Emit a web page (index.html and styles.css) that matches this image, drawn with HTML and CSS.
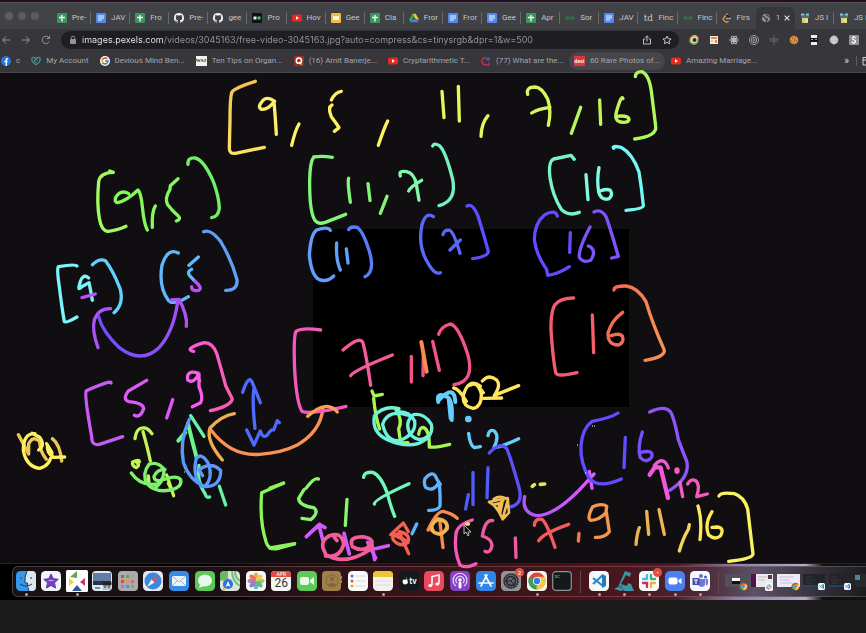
FILE: index.html
```html
<!DOCTYPE html>
<html lang="en">
<head>
<meta charset="utf-8">
<title>images.pexels.com</title>
<link rel="stylesheet" href="styles.css">
</head>
<body>
<svg class="defs" aria-hidden="true">
  <symbol id="sheet" viewBox="0 0 10 10"><rect width="10" height="10" rx="1" fill="#3b965b"/><path d="M5 2v6.500M2 4.500h6" stroke="#eef8ef" stroke-width="1.400"/></symbol>
  <symbol id="doc" viewBox="0 0 10 10"><rect width="10" height="10" rx="1" fill="#5288ee"/><path d="M2 3h6M2 5h6M2 7h4" stroke="#f4f7ff" stroke-width="1.100"/></symbol>
  <symbol id="slides" viewBox="0 0 10 10"><rect width="10" height="10" rx="1" fill="#eebb3e"/><rect x="2" y="3" width="6" height="4" fill="#fff8dc"/></symbol>
  <symbol id="github" viewBox="0 0 16 16"><path fill="#f3f3f3" d="M8 0a8 8 0 0 0-2.530 15.590c.4.070.55-.17.55-.38v-1.490c-2.010.37-2.530-.49-2.690-.94-.09-.23-.48-.94-.82-1.130-.28-.15-.68-.52 0-.53.63 0 1.080.58 1.230.82.72 1.210 1.870.87 2.330.66.070-.52.280-.87.510-1.070-1.780-.2-3.640-.89-3.640-3.950 0-.87.310-1.590.820-2.150-.080-.2-.36-1.020.080-2.120 0 0 .67-.21 2.200.82a7.600 7.600 0 0 1 4 0c1.530-1.040 2.200-.82 2.200-.82.440 1.100.160 1.920.080 2.120.510.560.820 1.270.820 2.150 0 3.070-1.870 3.750-3.650 3.950.290.250.540.730.540 1.480v2.200c0 .210.150.460.550.380A8 8 0 0 0 8 0z"/></symbol>
  <symbol id="youtube" viewBox="0 0 10 10"><rect y="1.500" width="10" height="7" rx="2" fill="#e8291f"/><path d="M4 3.300v3.400l3-1.700z" fill="#fff"/></symbol>
  <symbol id="drive" viewBox="0 0 10 10"><path d="M3.400.8h3.200L10 6.500H6.800z" fill="#f4c534"/><path d="M3.400.8 0 6.500l1.600 2.700L5 3.500z" fill="#38a35f"/><path d="M3.200 6.500H10L8.400 9.200H1.600z" fill="#477fe8"/></symbol>
  <symbol id="gfg" viewBox="0 0 10 10"><path d="M4.800 5H.7M5.200 5h4.100M3.900 3.800Q1 2.500.8 5q.4 2.500 4 0M6.100 3.800Q9 2.500 9.200 5q-.4 2.500-4 0" fill="none" stroke="#36784a" stroke-width="1"/></symbol>
  <symbol id="bot" viewBox="0 0 10 10"><path d="M1 1h8v4H1z" fill="#526d77"/><path d="M1 .5h3v2H1zM6 .5h3v2H6z" fill="#77c5d5"/><path d="M2 5h6v5H2z" fill="#d1cf86"/><path d="M5 6h3v3H5z" fill="#f4e94e"/></symbol>
  <symbol id="chrome" viewBox="0 0 20 20"><circle cx="10" cy="10" r="8.500" fill="#e04a3d"/><path d="M10 10 2.600 5.800A8.500 8.500 0 0 0 9.400 18.500z" fill="#38a35a"/><path d="M10 10 9.400 18.500A8.500 8.500 0 0 0 17.400 5.800H10z" fill="#f6c840"/><circle cx="10" cy="10" r="4" fill="#fff"/><circle cx="10" cy="10" r="3.200" fill="#397be5"/></symbol>
  <symbol id="vscode" viewBox="0 0 20 20"><rect width="20" height="20" rx="4.500" fill="#f6f9fc"/><path d="m4 7 10 8M4 13l10-9" stroke="#2489cf" stroke-width="2.200"/><path d="m13 3 4 2v10l-4 2z" fill="#2879ba"/></symbol>
  <symbol id="slack" viewBox="0 0 20 20"><rect width="20" height="20" rx="4.500" fill="#fafafa"/><g fill="none" stroke-width="2.300" stroke-linecap="round"><path d="M8 4v4M4 8h4" stroke="#4bbbe2"/><path d="M12 4v4M12 8h4" stroke="#3fae7b"/><path d="M12 12h4M12 12v4" stroke="#e8b33c"/><path d="M4 12h4v4" stroke="#d52d61"/></g></symbol>
</svg>

<header class="browser">
  <nav class="tabstrip" aria-label="Tabs">
    <div class="lights"><i></i><i></i><i></i></div>
    <div class="tabs">
      <button class="tab"><svg><use href="#sheet"/></svg><span>Pre-</span></button>
      <button class="tab"><svg><use href="#doc"/></svg><span>JAV</span></button>
      <button class="tab"><svg><use href="#sheet"/></svg><span>Fro</span></button>
      <button class="tab"><svg><use href="#github"/></svg><span>Pre-</span></button>
      <button class="tab"><svg><use href="#github"/></svg><span>gee</span></button>
      <button class="tab"><svg viewBox="0 0 10 10"><rect width="10" height="10" fill="#0b1418"/><path d="M1.500 3.500h3v3h-3z" fill="#e8eee9"/><path d="M5.500 3.500h3v3h-3z" fill="#42cf63"/></svg><span>Pro</span></button>
      <button class="tab"><svg><use href="#youtube"/></svg><span>Hov</span></button>
      <button class="tab"><svg><use href="#slides"/></svg><span>Gee</span></button>
      <button class="tab"><svg><use href="#sheet"/></svg><span>Cla</span></button>
      <button class="tab"><svg><use href="#drive"/></svg><span>Fror</span></button>
      <button class="tab"><svg><use href="#doc"/></svg><span>Fror</span></button>
      <button class="tab"><svg><use href="#doc"/></svg><span>Gee</span></button>
      <button class="tab"><svg><use href="#sheet"/></svg><span>Apr</span></button>
      <button class="tab"><svg><use href="#gfg"/></svg><span>Sor</span></button>
      <button class="tab"><svg><use href="#doc"/></svg><span>JAV</span></button>
      <button class="tab"><b>td</b><span>Finc</span></button>
      <button class="tab"><svg><use href="#gfg"/></svg><span>Finc</span></button>
      <button class="tab last"><svg viewBox="0 0 10 10" fill="none" stroke-width="1.200"><path d="M5.500.5 2 4.500q-1.500 1.500 0 3l1.500 1.300q1.400 1 3-.5" stroke="#e6a23e"/><path d="M4 5.500h5" stroke="#aaa"/><path d="m4 2 3 2" stroke="#16171a"/></svg><span>Firs</span></button>
      <button class="tab active"><svg viewBox="0 0 10 10"><circle cx="5" cy="5" r="4.300" fill="#8b8f94"/><path d="M1 4q2-1 3 1t2 1-1 3M6 1q-1 2 1 2t2 2" fill="none" stroke="#34363a" stroke-width="1.200"/></svg><span>1</span><svg class="close" viewBox="0 0 10 10"><path d="m2 2 6 6m0-6-6 6" stroke="#ddd" stroke-width="1.400"/></svg></button>
      <button class="tab"><svg><use href="#bot"/></svg><span>JS I</span></button>
      <button class="tab"><svg><use href="#bot"/></svg><span>JS I</span></button>
    </div>
  </nav>

  <div class="toolbar">
    <div class="nav">
      <button aria-label="Back"><svg viewBox="0 0 10 10"><path d="M9 5H1.500M5 1.500 1.500 5 5 8.500"/></svg></button>
      <button aria-label="Forward"><svg viewBox="0 0 10 10"><path d="M1 5h7.500M5 1.500 8.500 5 5 8.500"/></svg></button>
      <button aria-label="Reload"><svg viewBox="0 0 10 10"><path d="M8.300 6.500a3.700 3.700 0 1 1-.2-3.500M8.500.8v2.700H5.800"/></svg></button>
    </div>
    <div class="address">
      <svg class="lock" viewBox="0 0 10 10"><rect x="2" y="4" width="6" height="5" rx="1" fill="#92959a"/><path d="M3.300 4V2.700q0-1.500 1.700-1.500t1.700 1.500V4" fill="none" stroke="#92959a"/></svg>
      <input aria-label="Address" type="text" value="images.pexels.com/videos/3045163/free-video-3045163.jpg?auto=compress&amp;cs=tinysrgb&amp;dpr=1&amp;w=500">
      <button aria-label="Share"><svg viewBox="0 0 10 10"><path d="M3.200 4H1.500v5h7V4H6.800M5 6.500V1M3.300 2.500 5 .8l1.700 1.700"/></svg></button>
      <button aria-label="Bookmark"><svg viewBox="0 0 10 10"><path d="m5 1 1.200 2.700 2.900.3-2.200 1.900.7 2.900L5 7.300 2.400 8.800l.7-2.900L.9 4l2.900-.3z"/></svg></button>
    </div>
    <div class="extensions">
      <button aria-label="Colour picker"><svg viewBox="0 0 10 10"><circle cx="5" cy="5" r="4" fill="#cfe6d8" stroke="#e4793e" stroke-width="1.400"/><path d="M1 5a4 4 0 0 0 7 2.500" fill="none" stroke="#84b945" stroke-width="1.400"/><path d="M4 1Q8 0 9 4" fill="none" stroke="#e9bd45" stroke-width="1.400"/><circle cx="5.500" cy="5" r="2" fill="#21303d"/></svg></button>
      <button aria-label="Layout tool"><svg viewBox="0 0 10 10"><rect x="1" y="1" width="8" height="8" fill="#f2ece5"/><path d="M2 2h6v2H2zM2 5.500h2v1H2zM6 5h2v3H6z" fill="#e58a57"/></svg></button>
      <button aria-label="React tools"><svg viewBox="0 0 10 10" fill="none" stroke="#dadada" stroke-width=".7"><ellipse cx="5" cy="5" rx="4.500" ry="1.700"/><ellipse cx="5" cy="5" rx="4.500" ry="1.700" transform="rotate(60 5 5)"/><ellipse cx="5" cy="5" rx="4.500" ry="1.700" transform="rotate(120 5 5)"/><circle cx="5" cy="5" r=".8" fill="#ddd"/></svg></button>
      <button aria-label="Target"><svg viewBox="0 0 10 10" fill="none" stroke="#b6b7ba" stroke-width=".8"><circle cx="5" cy="5" r="4.500"/><circle cx="5" cy="5" r="2.700"/><circle cx="5" cy="5" r="1"/></svg></button>
      <button aria-label="Ruler"><svg viewBox="0 0 10 10" fill="none" stroke="#66676c"><path d="M0 4h10M5 0v10M1 6h8"/></svg></button>
      <button aria-label="Cookies"><svg viewBox="0 0 10 10"><circle cx="5" cy="5" r="4.300" fill="#d8913b"/><path d="M3 3h1M6 2h1M5 5h1M2 6h1M7 6h1M4 8h1" stroke="#82491e"/></svg></button>
      <button aria-label="Mask"><svg viewBox="0 0 10 10"><path d="M2 0h6v3H2zM2 7l3-1 3 1v3H2z" fill="#eee"/><path d="M1 3h8v4H1z" fill="#181519"/><path d="M2 4.500h2M6 4.500h2" stroke="#dc7894"/></svg></button>
      <button aria-label="Globe"><svg viewBox="0 0 10 10"><circle cx="5" cy="5" r="4.400" fill="#b9bdc4"/><path d="M2 4h6M3 7h4M5 1v8" stroke="#d5d7dd"/></svg></button>
      <button aria-label="S extension"><svg viewBox="0 0 10 10"><rect width="10" height="10" rx="1" fill="#909195"/><path d="M6.800 3Q4-.0 3.500 3.400 4 4.500 5.300 5q2 1.200.7 2.500Q4.500 8.700 3 7" fill="none" stroke="#fff" stroke-width="1.200"/></svg></button>
    </div>
  </div>

  <nav class="bookmarks" aria-label="Bookmarks">
    <a href="#"><svg viewBox="0 0 10 10"><circle cx="5" cy="5" r="5" fill="#2876dc"/><path d="M5.300 10V4q0-1.500 1.700-1.300M3.500 5.500h3" fill="none" stroke="#fff" stroke-width="1.400"/></svg>c</a>
    <a href="#"><svg viewBox="0 0 10 10" fill="none" stroke="#48929a" stroke-width="1.200"><path d="M5 8.800Q-.5 5 1.200 2 3.500-.2 6.500 4.500M5 8.800Q10.500 5 8.800 2 6.500-.2 3.500 4.500q0 2 2 1.500"/></svg>My Account</a>
    <a href="#"><svg viewBox="0 0 10 10" fill="none" stroke-width="1.600"><circle cx="5" cy="5" r="5" fill="#fff"/><path d="M7.300 3A3 3 0 0 0 2.300 3.800" stroke="#df4635"/><path d="M2.300 3.800a3 3 0 0 0 .3 2.900" stroke="#eab530"/><path d="M2.600 6.700A3 3 0 0 0 7 7.200" stroke="#349b54"/><path d="M7 7.200Q8 6.300 8 5H5" stroke="#427fe7"/></svg>Devious Mind Ben...</a>
    <a href="#"><span class="wsj">WSJ</span>Ten Tips on Organ...</a>
    <a href="#"><svg viewBox="0 0 10 10"><rect width="10" height="10" rx="1" fill="#9d3019"/><circle cx="4.900" cy="4.700" r="2.600" fill="none" stroke="#fff" stroke-width="1.500"/><path d="m5 6 2.500 2.500" stroke="#fff" stroke-width="1.300"/></svg>(16) Amit Banerje...</a>
    <a href="#"><svg><use href="#youtube"/></svg>Cryptarithmetic T...</a>
    <a href="#"><svg viewBox="0 0 10 10" fill="none" stroke-width="1.300"><path d="M5 1.500Q1 1.500 1 5t4 4h3V6" stroke="#c93046"/><path d="M7 1v4M5 3h4" stroke="#3f62bc"/></svg>(77) What are the...</a>
    <a href="#" class="current"><span class="desi">desi</span>60 Rare Photos of...</a>
    <a href="#"><svg><use href="#youtube"/></svg>Amazing Marriage...</a>
    <button class="more" aria-label="More bookmarks">»</button>
    <button class="folder" aria-label="All bookmarks"><svg viewBox="0 0 10 10"><path d="M1 1.500h9v7.500H1zM1 4h9" fill="none" stroke="#d2d2d4"/></svg></button>
  </nav>
</header>

<main class="stage">
<svg class="drawing" viewBox="0 73 866 490" role="img" aria-label="Merge sort sketch">
  <defs>
    <linearGradient id="g1" x1="0" y1="0" x2="0" y2="1"><stop stop-color="#f4c057"/><stop offset="1" stop-color="#ffe262"/></linearGradient>
    <linearGradient id="g3"><stop stop-color="#6d4cff"/><stop offset="1" stop-color="#9c50f6"/></linearGradient>
    <linearGradient id="g4"><stop stop-color="#fb5bdf"/><stop offset="1" stop-color="#f65dab"/></linearGradient>
    <linearGradient id="g5"><stop stop-color="#f46859"/><stop offset="1" stop-color="#f89353"/></linearGradient>
    <linearGradient id="g6"><stop stop-color="#ad55ff"/><stop offset="1" stop-color="#db5bff"/></linearGradient>
  </defs>
  <rect x="313" y="229" width="316" height="178"/>
  <g class="ink">
    <g transform="translate(0 70) scale(.33333)">
      <path stroke="url(#g1)" d="M766 34Q703 54 696 66Q690 80 690 150L688 235Q688 252 706 250L793 232"/>
      <path stroke="#fcf06a" d="M824 94Q803 78 789 91Q770 112 785 118Q805 119 822 95Q826 140 829 193"/>
      <path stroke="#a2fa63" d="M329 303L340 307Q300 308 296 335Q290 400 298 445Q305 485 325 484Q350 482 378 469"/>
      <path stroke="#83f95d" d="M386 371Q363 357 347 382Q343 397 352 398Q378 394 414 360Q423 369 427 410Q432 462 442 480M466 408Q455 425 457 472M534 326L511 347L510 358Q493 385 503 404Q518 423 534 437Q545 447 529 453"/>
      <path stroke="#72ef69" d="M564 283Q562 262 585 264Q612 270 640 335Q657 380 658 415Q655 440 635 443"/>
      <path stroke="#79f5fb" d="M231 588Q226 581 175 590Q170 597 178 650Q185 710 193 755Q198 760 231 741M266 624Q247 608 239 642Q232 664 244 651L267 638Q272 660 277 691"/>
      <path stroke="#65cffd" d="M277 584Q300 563 317 573Q338 600 360 655Q373 702 342 728"/>
      <path stroke="#60b8fa" d="M535 549Q503 532 486 585Q475 650 505 691Q520 708 565 680M595 561L567 586M575 598Q560 605 569 617L585 634"/>
      <path stroke="#5e9ff8" d="M611 485Q632 476 661 513Q694 567 711 629Q714 662 677 661"/>
      <path stroke="#b952f6" d="M246 683L286 672M585 634Q609 653 596 661Q574 665 575 650"/>
      <path stroke="url(#g3)" d="M296 740Q307 785 358 833Q423 883 476 834Q520 787 533 696"/>
      <path stroke="#a853f5" d="M332 716Q296 714 283 750Q275 780 294 833M514 690L537 688Q563 735 559 769"/>
    </g>
    <g transform="translate(290 70) scale(.33333)">
      <path stroke="#fff161" d="M27 162Q16 180 5 226M154 64Q135 67 124 90M126 105Q112 112 124 140Q142 164 147 173L133 184M293 153Q282 175 265 226"/>
      <path stroke="#e5f55d" d="M456 64L462 143M505 49L508 153M594 137Q574 160 573 199"/>
      <path stroke="#d5f65c" d="M713 73Q707 51 736 51Q755 52 773 87Q785 123 775 166M725 129Q742 117 780 112"/>
      <path stroke="#bcf45c" d="M872 112L844 190"/>
      <path stroke="#82f578" d="M127 262Q96 257 71 261Q60 276 59 330Q58 420 73 448Q83 465 106 457L167 433M176 325Q172 335 181 397M234 341L240 392M291 379L271 430"/>
      <path stroke="#80f9ad" d="M331 318Q325 300 350 305Q373 310 379 343L387 391M356 363Q361 350 395 331"/>
      <path stroke="#76f0bd" d="M428 228Q432 217 448 227Q466 241 488 328Q501 392 447 407"/>
      <path stroke="#629efb" d="M121 481Q113 469 80 480Q62 492 58 555Q64 615 86 628Q112 638 131 618M140 519Q137 570 151 600M169 537L174 579"/>
      <path stroke="#587df9" d="M176 479Q180 468 202 472Q220 485 237 541Q257 604 225 620"/>
      <path stroke="#5a67f9" d="M430 440Q408 424 396 464Q382 530 416 583Q436 616 451 608M459 494Q463 478 480 481Q492 488 510 550M480 540L511 510"/>
      <path stroke="#5c4eff" d="M531 408Q549 398 565 441Q581 493 595 544Q594 560 548 566"/>
    </g>
    <g transform="translate(520 70) scale(.33333)">
      <path stroke="#c1f35b" d="M239 90L242 163M309 86Q305 72 291 119Q280 152 302 156Q326 160 327 147Q323 135 290 139"/>
      <path stroke="#b0f75e" d="M346 20Q347 5 365 5Q387 13 394 64L407 168Q412 199 344 207"/>
      <path stroke="#77f4ca" d="M163 268L153 256L101 267Q84 275 90 323Q98 377 124 418Q145 440 178 427"/>
      <path stroke="#7efbe5" d="M198 314L204 389M237 293Q230 329 236 366Q244 393 267 386Q280 374 271 361Q258 355 238 364"/>
      <path stroke="#75f6f7" d="M281 235Q274 226 303 232Q337 250 357 306Q365 355 370 407Q369 417 318 421"/>
      <path stroke="#624aff" d="M112 438Q106 417 74 434Q43 460 43 510Q49 555 80 599L83 616Q116 612 148 590M151 488L149 547"/>
      <path stroke="#7f53fa" d="M210 471Q175 537 178 562Q190 580 212 571Q229 546 213 532L205 528M222 426Q243 415 258 440Q268 466 295 559L275 564"/>
      <path stroke="#f45b72" d="M161 684Q122 684 106 703Q92 720 93 782Q99 868 107 908Q110 922 171 908"/>
      <path stroke="#f55f69" d="M217 735L221 848"/>
      <path stroke="#f46c59" d="M308 727Q274 752 264 789Q263 826 296 825Q314 817 307 798Q297 788 274 797"/>
      <path stroke="url(#g5)" d="M282 660Q281 647 319 648Q354 653 378 695Q398 762 432 838Q440 860 375 871"/>
    </g>
    <g transform="translate(0 340) scale(.33333)">
      <path stroke="#c75bf7" d="M333 129Q336 118 259 152Q252 163 275 290Q275 322 305 311L368 290"/>
      <path stroke="#db59f7" d="M440 121L385 153Q366 179 387 185Q430 189 431 206Q421 235 403 226M518 179L500 234"/>
      <path stroke="#f75dec" d="M594 99Q558 89 563 120Q580 133 597 101L597 140Q611 174 602 188L577 200M592 100L599 123"/>
      <path stroke="url(#g4)" d="M581 34Q550 27 612 8Q639 7 651 43Q667 99 677 137Q689 161 697 177Q691 199 631 212"/>
      <path stroke="#ebc653" d="M55 284Q71 313 86 342L86 311Q99 285 119 305Q120 335 139 358M157 296Q180 313 185 363"/>
      <path stroke="#fff15e" d="M105 281Q70 279 70 331Q79 380 119 385Q151 378 156 338Q134 301 142 315Q140 341 161 352L194 351M116 330Q137 315 119 292L96 280"/>
      <path stroke="#c2f458" d="M405 296Q410 260 433 264Q442 263 456 281M429 275Q443 325 451 363M418 366Q418 357 398 366Q395 379 409 383Q421 375 411 369M445 408L447 430M500 405Q511 436 521 467M505 430L511 442"/>
      <path stroke="#7ef26d" d="M394 399Q422 440 472 432Q494 418 492 387Q472 363 447 373Q426 401 440 430Q466 459 510 450Q547 443 542 419Q530 405 497 417Q462 430 462 409Q472 387 495 388M450 438Q461 458 488 419"/>
      <path stroke="#6df48e" stroke-width="12" d="M564 250Q571 282 590 353M556 278L535 302"/>
      <path stroke="#67f4aa" d="M572 227L612 289M597 376Q589 425 616 463Q619 474 629 471M658 439L677 495"/>
      <path stroke="#5a99fc" d="M568 238Q538 302 550 367Q567 420 614 440Q663 440 662 391Q633 363 597 389L608 407M605 439Q576 406 589 355Q604 336 625 370Q640 412 616 438"/>
      <path stroke="#4d6bff" d="M728 157Q747 97 759 133L781 188M763 142Q755 170 765 265M740 270L762 315Q774 288 781 273Q787 296 801 286Q815 265 821 270L832 242L838 248"/>
      <path stroke="#f3ad51" d="M703 221Q665 227 630 264Q617 301 667 360"/>
      <path stroke="#f99253" d="M633 270Q693 350 779 343Q845 339 890 316Q962 275 969 204"/>
      <path stroke="#8bf45b" d="M850 430L785 458Q778 545 799 608Q807 632 835 625L883 612"/>
    </g>
    <g transform="translate(270 310) scale(.33333)">
      <path stroke="#f359bb" d="M152 60Q97 52 78 64Q70 80 74 180Q80 280 96 304Q121 314 228 289"/>
      <path stroke="#f9a04f" d="M113 319Q170 267 202 306"/>
      <path stroke="#f45b9a" d="M219 120Q268 78 278 96Q288 130 302 226M242 197Q249 182 367 135"/>
      <path stroke="#f25488" d="M424 139L424 216M460 135L459 197M488 94L508 181M506 73Q513 50 540 42Q566 46 594 136Q615 214 552 224"/>
      <path stroke="#fa8d4c" stroke-width="12" d="M454 96L470 185"/>
      <path stroke="#a7f750" d="M306 243L312 258L337 253M311 265Q316 320 329 357M378 300Q399 330 386 357L392 399L414 398M446 373Q449 350 462 353Q479 362 478 411Q494 414 539 403"/>
      <path stroke="#6df3dc" d="M387 296Q340 285 313 318Q305 368 352 389Q404 412 444 401Q493 380 484 343Q464 308 430 314Q402 337 421 373Q449 402 476 376M416 316Q353 296 338 343Q350 398 391 391Q440 371 434 333Q420 305 387 305"/>
      <path stroke="#63cfff" stroke-width="12" d="M505 276Q497 244 532 261Q549 269 545 330M509 268Q553 222 556 276M536 264L542 325"/>
      <circle cx="595" cy="327" r="10" fill="#66c7ff" stroke="none"/>
      <path stroke="#63cfff" d="M596 370Q599 404 613 413L631 410M654 377Q657 356 673 363Q689 379 672 412Q690 413 746 386"/>
      <path stroke="#ffe65e" d="M551 234Q566 235 589 274M637 213Q657 190 680 210Q694 226 673 256L746 227M631 228Q594 202 580 257Q576 288 609 295Q635 290 634 252Q624 212 600 226M641 265L695 264M620 222L640 248"/>
      <path stroke="#8bf45b" d="M0 534L41 519M0 714L74 701"/>
      <path stroke="#88f56d" d="M145 507Q134 500 108 535M102 539L86 565Q87 587 131 593Q149 606 122 629L96 625M231 568L226 646"/>
      <path stroke="#70f7ba" d="M281 502Q282 485 308 487Q333 496 352 550Q362 590 374 619M313 582Q311 569 417 521"/>
      <path stroke="#5db3fc" d="M476 601Q501 602 510 589Q511 540 507 517Q491 547 468 533Q460 522 465 506Q484 484 495 496Q502 512 511 523M440 642L426 671"/>
      <path stroke="#505bf9" d="M595 554L587 597M609 487L609 584M654 473L651 563"/>
      <path stroke="#5d50f9" d="M658 429Q689 394 710 415Q723 446 747 532Q761 583 720 591"/>
      <path stroke="#efbd54" stroke-width="8" d="M657 576Q680 586 698 628L717 608L713 564L657 576M671 567Q688 555 710 566M671 584L697 578L690 612M714 568L700 618M700 572Q684 580 687 600"/>
      <path stroke="#f68b4c" d="M474 660Q500 603 520 604Q548 611 562 625M503 626Q475 635 484 660Q508 684 532 657Q535 630 503 626M509 629L519 713"/>
      <path stroke="#efb950" d="M503 629Q476 643 491 666Q516 684 531 652Q532 631 503 629"/>
      <path stroke="#f45f52" d="M362 674L400 639L415 665M388 670Q361 676 371 691Q393 714 414 697Q423 673 388 665L401 697L416 731M378 678L408 693L392 682"/>
      <path stroke="#d05af9" stroke-width="11" d="M109 680L148 643L165 653M118 671L147 646L159 692M222 670L238 732M221 688L226 701M293 697L317 744M302 719L355 707M306 706L314 749"/>
      <path stroke="#f45b9a" stroke-width="11" d="M166 729Q145 696 179 677Q217 664 221 704Q208 746 167 738M245 703Q238 678 284 681Q313 688 304 704Q278 729 247 710M166 733Q225 770 303 717M303 691L307 715M193 682L201 692"/>
      <path stroke="#f559b7" d="M607 630Q563 643 558 670Q551 724 570 765Q585 777 618 761"/>
      <path stroke="#f059a3" d="M668 632Q646 626 637 678Q666 687 666 707Q661 732 645 724M736 684L738 742"/>
      <path stroke="#e8e352" stroke-width="11" d="M787 529L793 524M811 523L824 522M590 642L595 642"/>
    </g>
    <g transform="translate(520 380) scale(.33333)">
      <path stroke="url(#g6)" d="M14 350Q4 397 49 407Q112 408 209 296L222 282M208 274L216 325"/>
      <path stroke="#634cff" d="M294 99Q274 113 216 124Q187 145 183 197Q180 247 207 294Q235 328 304 297M316 172L312 263"/>
      <path stroke="#764fff" d="M367 156Q351 204 361 233Q379 252 395 232Q403 208 362 217"/>
      <path stroke="#9153fa" d="M389 96Q435 75 451 95Q462 112 475 179Q490 219 501 246Q509 294 449 331"/>
      <path stroke="#f258dc" stroke-width="13" d="M389 284L405 261L422 263L444 354"/>
      <path stroke="#f05bce" d="M403 256Q431 225 445 264M480 307L488 350"/>
      <ellipse cx="471" cy="272" rx="8" ry="10" fill="#f55bc5" stroke="none"/>
      <path stroke="#f65bb9" d="M503 312Q512 294 527 302Q542 314 530 350L562 342"/>
      <path stroke="#f35b5e" d="M43 436Q44 415 66 418Q81 431 105 502M56 482Q67 461 146 433"/>
      <path stroke="#f1784f" d="M177 460L175 483"/>
      <path stroke="#f4974f" d="M258 397L260 379Q247 368 218 380Q199 416 213 421Q238 420 259 397L268 455Q254 473 226 472"/>
      <path stroke="#edb452" d="M358 443Q351 460 348 493M380 394L386 463M417 389L433 463"/>
      <path stroke="#f7d455" d="M508 434L505 448Q489 474 478 513"/>
      <path stroke="#fbe958" d="M534 378Q547 419 540 479M576 395Q552 433 566 465Q584 481 601 468Q615 444 592 441L576 442"/>
      <path stroke="#faf260" d="M597 348Q602 335 643 341Q673 351 683 387L699 522Q697 537 626 544"/>
    </g>
  </g>
  <path d="M592 426h1m1 0h1M577 445h1M585 473h1M184 472h1" stroke="#fff"/>
  <path d="M464 525v9l2-2 2 4 1-1-1-3h3z" fill="#111" stroke="#ddd" stroke-width=".8"/>
</svg>
</main>

<footer class="wallpaper">
  <nav class="dock" aria-label="Dock">
    <div class="apps">
      <button class="on" aria-label="Finder"><svg viewBox="0 0 20 20"><rect width="20" height="20" rx="4.500" fill="#3498ed"/><path d="M11 0h5q4 0 4 4v12q0 4-4 4h-3q-2-5-1.500-8H9Q9 5 11 0" fill="#dce6ee"/><path d="M5 6v2M15 6v2M4 13q6 4 12 0M11 0Q8 7 9 12h2.500Q11 15 13 20" fill="none" stroke="#263a55"/></svg></button>
      <button aria-label="iMovie"><svg viewBox="0 0 20 20"><rect width="20" height="20" rx="4.500" fill="#f5f3fa"/><path d="m10 3 2.200 4.700 5 .6-3.700 3.500 1 5.200-4.500-2.600L5.500 17l1-5.200-3.700-3.500 5-.6z" fill="#7042c7" stroke="#5933aa"/><path d="M7.500 9.500h5" stroke="#d9a5ee"/></svg></button>
      <button class="on big" aria-label="Sketchpad"><svg viewBox="0 0 22 22"><rect width="22" height="22" rx="1.500" fill="#fff"/><path d="m4 7 7-6v7z" fill="#6ca34a"/><path d="m3 8 5 4-5 4z" fill="#edd637"/><path d="m19 8-5 4 5 4z" fill="#c33770"/><path d="m11 15 5 6H6z" fill="#31569e"/></svg></button>
      <button aria-label="Preview"><svg viewBox="0 0 20 20"><rect width="20" height="20" rx="4" fill="#dfe9f4"/><path d="M1 2h18v8H1z" fill="#627ca6"/><path d="M1 10h18v4H1z" fill="#263351"/><path d="M11 11h8v8h-8z" fill="#bcbfc3"/><path d="M11 11h8v3h-8zM12 16h2M16 16h2M3 17h5" stroke="#262a32" fill="#1d2027"/></svg></button>
      <button aria-label="Launchpad"><svg viewBox="0 0 20 20"><rect width="20" height="20" rx="4" fill="#a9abad"/><path d="M3 4h3v3H3zM3 9h3v3H3z" fill="#df4a42"/><path d="M8 4h3v3H8z" fill="#49ae65"/><path d="M13 4h3v3h-3zM8 9h3v3H8z" fill="#e99744"/><path d="M13 9h3v3h-3zM3 14h3v3H3z" fill="#e7638b"/><path d="M8 14h3v3H8z" fill="#4b94dd"/><path d="M13 14h3v3h-3z" fill="#69b958"/></svg></button>
      <button aria-label="Safari"><svg viewBox="0 0 20 20"><rect width="20" height="20" rx="4.500" fill="#e6eaf0"/><circle cx="10" cy="10" r="8.500" fill="#3989dc"/><path d="m16 4-7.500 4.500 3 3z" fill="#e75245"/><path d="m4 16 4.500-7.500 3 3z" fill="#eef4fb"/></svg></button>
      <button aria-label="Mail"><svg viewBox="0 0 20 20"><rect width="20" height="20" rx="4.500" fill="#368ae9"/><rect x="3" y="5" width="14" height="10" rx="1" fill="#eef3fa"/><path d="m3 5 7 6 7-6M3 15l5-5M17 15l-5-5" fill="none" stroke="#8fa1b5" stroke-width=".8"/></svg></button>
      <button aria-label="Messages"><svg viewBox="0 0 20 20"><rect width="20" height="20" rx="4.500" fill="#5bc956"/><ellipse cx="10" cy="9.500" rx="7" ry="6" fill="#e9f8e8"/><path d="m5 13-1 4 5-2" fill="#e9f8e8"/></svg></button>
      <button aria-label="Maps"><svg viewBox="0 0 20 20"><rect width="20" height="20" rx="4.500" fill="#dce5dc"/><path d="M0 4q0-4 4-4h4v8L0 10z" fill="#67ba63"/><path d="M12 0q0 10 8 15M15 0q0 7 5 10" fill="none" stroke="#78bd70" stroke-width="2"/><path d="M4 20V9" stroke="#e9bc4f" stroke-width="2"/><circle cx="8" cy="13" r="5" fill="#2c73dc"/><path d="m5.500 16 2.500-6 2.500 6L8 14.500z" fill="#fff"/></svg></button>
      <button aria-label="Photos"><svg viewBox="0 0 20 20"><rect width="20" height="20" rx="4.500" fill="#f8f8f6"/><g opacity=".85"><ellipse cx="10" cy="5.500" rx="2.300" ry="4" fill="#ed9d33"/><ellipse cx="10" cy="14.500" rx="2.300" ry="4" fill="#4caed0"/><ellipse cx="5.500" cy="10" rx="4" ry="2.300" fill="#b36bb2"/><ellipse cx="14.500" cy="10" rx="4" ry="2.300" fill="#99bd46"/><g transform="rotate(45 10 10)"><ellipse cx="10" cy="5.500" rx="2.300" ry="4" fill="#e0ca3c"/><ellipse cx="10" cy="14.500" rx="2.300" ry="4" fill="#806fc2"/><ellipse cx="5.500" cy="10" rx="4" ry="2.300" fill="#e45c4c"/><ellipse cx="14.500" cy="10" rx="4" ry="2.300" fill="#50ae72"/></g></g></svg></button>
      <button class="tile calendar" aria-label="Calendar"><small>APR</small><span>26</span></button>
      <button aria-label="FaceTime"><svg viewBox="0 0 20 20"><rect width="20" height="20" rx="4.500" fill="#5ecb59"/><rect x="3" y="6" width="9" height="8" rx="2" fill="#eaf8e9"/><path d="m13 9 4-3v8l-4-3z" fill="#eaf8e9"/></svg></button>
      <button aria-label="Contacts"><svg viewBox="0 0 20 20"><rect width="19" height="20" rx="4" fill="#a08049"/><circle cx="10" cy="10" r="6" fill="none" stroke="#84683c"/><circle cx="10" cy="8" r="2.300" fill="#84683c"/><path d="M5.500 14q4.500-5 9 0-4 4-9 0" fill="#84683c"/><path d="M19.500 5v3" stroke="#d0784a"/><path d="M19.500 9v3" stroke="#61a35a"/></svg></button>
      <button aria-label="Reminders"><svg viewBox="0 0 20 20"><rect width="20" height="20" rx="4.500" fill="#fafafa"/><circle cx="4" cy="5" r="1.500" fill="#367ddd"/><circle cx="4" cy="10" r="1.500" fill="#e4544c"/><circle cx="4" cy="15" r="1.500" fill="#eda03a"/><path d="M7.500 5h10M7.500 10h10M7.500 15h10" stroke="#cfcfcf" stroke-width=".8"/></svg></button>
      <button class="on" aria-label="Notes"><svg viewBox="0 0 20 20"><rect width="20" height="20" rx="4.500" fill="#f4f2ee"/><path d="M0 6V4q0-4 4-4h12q4 0 4 4v2z" fill="#edc634"/><path d="M2 10h16M2 14h16" stroke="#d5d2ce" stroke-width=".7"/></svg></button>
      <button class="tile tv" aria-label="Apple TV"><svg viewBox="0 0 10 10"><path d="M6 2Q6 .5 7.200.2 7.300 1.500 6 2M8.500 3.500q-1.700 1.700.5 3Q7.500 9.800 5.500 9q-2 .8-3-1.200Q1 4 3.500 3q1 0 1.800.5Q7 2.300 8.500 3.500" fill="#fff"/></svg>tv</button>
      <button aria-label="Music"><svg viewBox="0 0 20 20"><rect width="20" height="20" rx="4.500" fill="#e94a5d"/><path d="M8 14V5.500L15 4v8.500" fill="none" stroke="#fff" stroke-width="1.500"/><ellipse cx="6.300" cy="14.500" rx="2" ry="1.600" fill="#fff"/><ellipse cx="13.300" cy="13" rx="2" ry="1.600" fill="#fff"/></svg></button>
      <button aria-label="Podcasts"><svg viewBox="0 0 20 20"><rect width="20" height="20" rx="4.500" fill="#8443c6"/><path d="M6 15a7 7 0 1 1 8 0M7 12a4 4 0 1 1 6 0" fill="none" stroke="#eedcf8" stroke-width="1.200"/><circle cx="10" cy="9" r="1.700" fill="#fff"/><path d="M10 12v4" stroke="#fff" stroke-width="3" stroke-linecap="round"/></svg></button>
      <button aria-label="App Store"><svg viewBox="0 0 20 20"><rect width="20" height="20" rx="4.500" fill="#2e87e6"/><path d="m11 4-6 11M9 4l6 11M3 12h14" stroke="#f5f9ff" stroke-width="1.700" stroke-linecap="round"/></svg></button>
      <button aria-label="Settings"><svg viewBox="0 0 20 20"><rect width="20" height="20" rx="4.500" fill="#929397"/><circle cx="10" cy="10" r="7" fill="#63656a" stroke="#292a2e" stroke-width="1.600" stroke-dasharray="2 .4"/><circle cx="10" cy="10" r="4.500" fill="none" stroke="#252629" stroke-width="1.500"/><path d="m10 10 4-4m-4 4H4m6 0 4 5" stroke="#222"/></svg><em>2</em></button>
      <button class="on" aria-label="Chrome"><svg viewBox="0 0 20 20"><rect width="20" height="20" rx="4.500" fill="#f4f4f2"/><use href="#chrome" width="20" height="20"/></svg></button>
      <button aria-label="Terminal"><svg viewBox="0 0 20 20"><rect x=".7" y=".7" width="18.600" height="18.600" rx="3" fill="#121a1c" stroke="#8d9195" stroke-width="1.200"/><path d="m3 4 1 1.500L3 7M5 4v3M7 4v1M7 6v1" stroke="#55a75b"/></svg></button>
    </div>
    <i class="rule"></i>
    <div class="apps running">
      <button class="on" aria-label="Code"><svg><use href="#vscode"/></svg></button>
      <button class="on" aria-label="Charles"><svg viewBox="0 0 20 20"><path d="m11 0 6 2-1 4-4-2-5 9 6 2 1-3 3 1 3 7-7 1-4-2-2 1-7-2 4-2z" fill="#3b97a5"/><path d="m4 15 5 3M8 14l-1 2" stroke="#1a5c78"/></svg></button>
      <button class="on" aria-label="Slack"><svg><use href="#slack"/></svg><em>•</em></button>
      <button class="on" aria-label="Zoom"><svg viewBox="0 0 20 20"><rect width="20" height="20" rx="5" fill="#4a80ef"/><rect x="3.500" y="6.500" width="9" height="7" rx="2" fill="#fff"/><path d="m13.500 9 3-2v6l-3-2z" fill="#fff"/></svg></button>
      <button class="on" aria-label="Teams"><svg viewBox="0 0 20 20"><rect width="20" height="20" rx="4.500" fill="#f8f8fc"/><circle cx="11" cy="5" r="2" fill="#6970cf"/><circle cx="15.500" cy="6" r="1.500" fill="#5158b0"/><path d="M7 8h8v6q-3 4-7 0zM15.500 8H18v5l-2 2z" fill="#7178d4"/><path d="M2.500 7h7v7h-7z" fill="#474fa5"/><path d="M4 9h4M6 9v4" stroke="#fff" stroke-width="1.100"/></svg></button>
    </div>
    <i class="rule"></i>
    <div class="windows">
      <button aria-label="Chrome window"><svg viewBox="0 0 24 18"><path d="M0 1h22v13H0z" fill="#535157"/><path d="M7 5h8v6H7z" fill="#111"/><path d="M7 5h8v3H7z" fill="#fff"/><use href="#chrome" x="14" y="9" width="9" height="9"/></svg></button>
      <button aria-label="Slack window"><svg viewBox="0 0 24 18"><path d="M0 1h5v13H0z" fill="#4b174a"/><path d="M5 1h17v13H5z" fill="#eee9ef"/><path d="M7 4h9M7 7h7" stroke="#aaa" stroke-width=".7"/><path d="M17 2h4v4h-4z" fill="#4f3e47"/><use href="#slack" x="14" y="10" width="8" height="8"/></svg></button>
      <button aria-label="Document window"><svg viewBox="0 0 24 18"><path d="M0 1h23v13H0z" fill="#eeebf7"/><path d="M2 4h15M3 7h9M3 10h12" stroke="#bd9ed2" stroke-width=".7"/><use href="#chrome" x="14" y="9" width="9" height="9"/></svg></button>
      <button aria-label="Editor window"><svg viewBox="0 0 24 18"><path d="M0 1h22v13H0z" fill="#24232a"/><path d="M2 4h7M2 7h10M3 10h6" stroke="#3e424a" stroke-width=".7"/><path d="M0 13h15" stroke="#2a6392"/><use href="#vscode" x="15" y="10" width="7" height="7"/></svg></button>
      <button aria-label="Second editor window"><svg viewBox="0 0 24 18"><path d="M0 1h22v13H0z" fill="#24232a"/><path d="M2 4h5M2 7h10M3 10h6" stroke="#3e424a" stroke-width=".7"/><path d="M0 13h15" stroke="#2a6392"/><use href="#vscode" x="15" y="10" width="7" height="7"/></svg></button>
      <button aria-label="Terminal window"><svg viewBox="0 0 24 18"><path d="M0 1h22v13H0z" fill="#29282d"/><path d="M0 2h5v5H0z" fill="#4b8598"/><path d="M11 4h2" stroke="#aaa"/></svg></button>
    </div>
  </nav>
</footer>
</body>
</html>
```

FILE: styles.css
```css
* { box-sizing: border-box; }

body {
  margin: 0;
  min-height: 100vh;
  display: flex;
  flex-direction: column;
  overflow: hidden;
  background: #1b1b1b;
  color: #b4b5b9;
  font: 8px/10px Roboto, "Liberation Sans", sans-serif;
  padding-bottom: 33px;
}

button {
  padding: 0;
  border: 0;
  background: none;
  color: inherit;
  font: inherit;
}

svg { display: block; flex: none; }
.defs { position: absolute; width: 0; height: 0; }

.browser {
  border-top: 2px solid #240d1c;
  border-bottom: 1px solid #49484e;
  background: #37373b;
}

.tabstrip {
  display: flex;
  height: 27px;
  background: #414246;
  border-top: 1px solid #56565b;
  overflow: hidden;
}
.lights { flex: none; display: flex; gap: 5px; padding: 9px 13px 0 5px; }
.lights i { width: 8px; height: 8px; border-radius: 50%; background: #5d5c61; }
.tabs { flex: 1; min-width: 0; display: flex; margin-right: -7px; padding-top: 4px; }
.tab {
  position: relative;
  flex: 1 1 0;
  min-width: 0;
  display: flex;
  align-items: center;
  gap: 5px;
  padding: 0 4px 0 5px;
  color: #c4c5c8;
}
.tab::after {
  content: "";
  position: absolute;
  right: 0;
  top: 5px;
  width: 1px;
  height: 12px;
  background: #68696e;
}
.tab svg { width: 10px; height: 10px; }
.tab b { width: 10px; font: 9px/10px "DejaVu Serif", serif; }
.tab span { flex: 1; white-space: nowrap; text-align: left; }
.tab.active { background: #37373b; border-radius: 6px 6px 0 0; }
.tab.active::after, .tab.last::after { display: none; }
.tab .close { width: 8px; height: 8px; margin-left: -3px; }

.toolbar { display: flex; align-items: center; height: 22px; }
.nav { flex: none; display: flex; gap: 10px; padding: 0 10px 0 1px; }
.nav svg, .address button svg { width: 10px; height: 10px; fill: none; stroke: #96979b; }
.address {
  flex: 1;
  display: flex;
  align-items: center;
  gap: 10px;
  height: 18px;
  padding: 0 7px;
  border-radius: 9px;
  background: #1f1f23;
}
.lock { width: 10px; height: 10px; margin-right: -6px; }
.address input {
  flex: 1;
  min-width: 0;
  padding: 0;
  border: 0;
  outline: 0;
  font: 9px/16px Inter, "Liberation Sans", sans-serif;
  color: transparent;
  background: linear-gradient(to right, #f1f1f2 81px, #96979c 81px);
  -webkit-background-clip: text;
  background-clip: text;
}
.address button svg { stroke: #c4c4c8; }
.extensions { flex: none; display: flex; gap: 10px; padding: 0 7px 0 10px; }
.extensions svg { width: 10px; height: 10px; }

.bookmarks { display: flex; align-items: center; height: 21px; padding: 0 0 2px 1px; }
.bookmarks a {
  flex: none;
  display: flex;
  align-items: center;
  gap: 5px;
  height: 18px;
  margin-right: 11px;
  color: #a4a5aa;
  text-decoration: none;
  white-space: nowrap;
}
.bookmarks a svg { width: 10px; height: 10px; }
.wsj { width: 11px; background: #f2f2f2; color: #222; font: bold 5px/10px "Liberation Serif", serif; }
.desi { width: 11px; background: #d9383c; color: #fff; font: bold 5px/10px "Liberation Sans", sans-serif; text-align: center; }
.bookmarks .current { margin: 0 6px 0 -6px; padding: 0 5px; border-radius: 9px; background: #45454a; }
.more { margin-left: auto; padding-right: 7px; color: #ddd; font-size: 10px; }
.folder { width: 10px; height: 10px; padding-left: 5px; border-left: 1px solid #5b5b60; overflow: hidden; }
.folder svg { width: 10px; height: 10px; }

.stage {
  position: relative;
  z-index: 1;
  flex: 1;
  min-height: 0;
  background: #100e10;
}
.drawing { width: 100%; height: 100%; overflow: visible; }
.ink { fill: none; stroke-width: 10; stroke-linecap: round; stroke-linejoin: round; }

.wallpaper {
  padding: 2px 0 3px 12px;
  border-top: 1px solid #252226;
  background: linear-gradient(to right, #000 0, #060204 24%, #22090c 34%, #3a0a10 52%, #580c15 66%, #511727 78%, #8f7fab 85%, #b4a8cc 93%, #111 95%);
}
.dock {
  display: flex;
  align-items: center;
  height: 31px;
  border: 1px solid rgba(170, 140, 145, .35);
  border-right: 0;
  border-radius: 6px 0 0 6px;
  background: linear-gradient(to right, #151114 0, #1b1013 25%, #34131a 42%, #3a1418 55%, #4a161c 72%, #4c2a3a 81%, #5c5268 87%, #35333b 94%, #1c1c20 100%);
}
.apps { flex: 562 1 0; display: grid; grid-template-columns: repeat(22, 1fr); }
.apps.running { flex: 127 1 0; grid-template-columns: repeat(5, 1fr); }
.apps button { position: relative; display: flex; align-items: center; justify-content: center; height: 29px; padding-bottom: 2px; }
.apps svg { width: 20px; height: 20px; }
.apps .big svg { width: 22px; height: 22px; }
.apps .on::after {
  content: "";
  position: absolute;
  bottom: 0;
  left: 50%;
  width: 3px;
  height: 3px;
  margin-left: -1px;
  border-radius: 50%;
  background: #b99ea3;
}
.apps em {
  position: absolute;
  top: 1px;
  right: 0;
  width: 9px;
  height: 9px;
  border-radius: 50%;
  background: #df5041;
  color: #fff;
  font: 6px/9px Roboto, sans-serif;
}
.apps .tile {
  justify-self: center;
  width: 20px;
  height: 20px;
  margin-top: 4px;
  padding: 0;
  border-radius: 4px;
}
.apps .calendar {
  flex-direction: column;
  justify-content: flex-start;
  overflow: hidden;
  background: #f6f6f5;
  color: #333;
  font: 12px/13px Roboto, sans-serif;
}
.calendar small { width: 100%; background: #df4d43; color: #fff; font: 5px/6px Roboto, sans-serif; }
.apps .tv {
  background: #15191c;
  color: #fff;
  font: 500 9px/20px Roboto, sans-serif;
}
.apps .tv svg { width: 8px; height: 8px; }
.rule { width: 1px; height: 22px; margin: 0 5px; background: #66444d; }
.windows { flex: 141 1 0; display: flex; gap: 2px; padding-left: 1px; overflow: hidden; }
.windows svg { width: 24px; height: 18px; }
```
